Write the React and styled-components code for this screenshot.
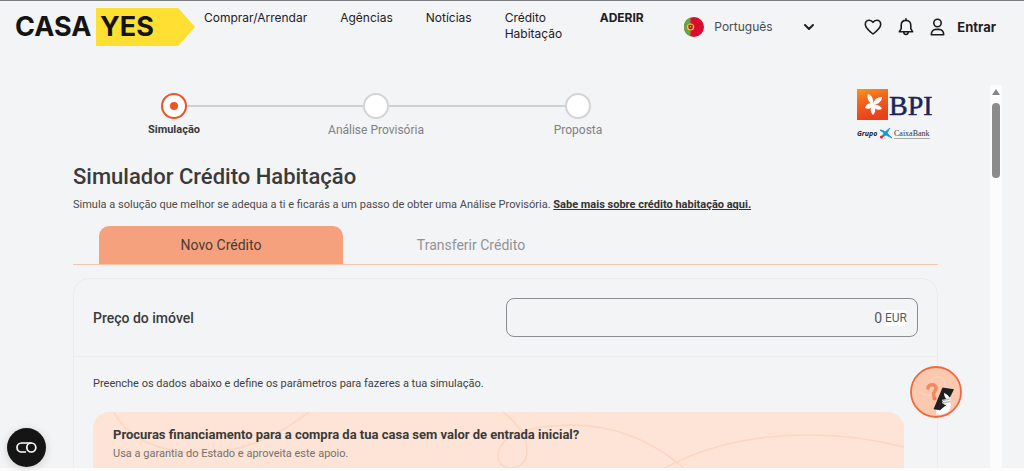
import React from "react";
import styled, { createGlobalStyle, css } from "styled-components";

const GlobalStyle = createGlobalStyle`
  *, *::before, *::after { box-sizing: border-box; }
  html, body { margin: 0; height: 100%; overflow: hidden; }
  body { background: #f3f4f6; color: #3a3a3a; font-family: Roboto, "Liberation Sans", sans-serif; }
  h1, h2, p, ul, ol { margin: 0; padding: 0; }
  button, input, select { font: inherit; color: inherit; }
`;

const Page = styled.div`
  display: flex;
  flex-direction: column;
  height: 100vh;
  border-top: 1px solid #7d7e82;
  border-bottom: 3px solid #fcfcfc;
`;

/* Header */
const Header = styled.header`
  display: flex;
  align-items: flex-start;
  flex: none;
  height: 84px;
  padding: 7px 28px 0 15px;
  font-family: Inter, "Liberation Sans", sans-serif;
  font-size: 12px;
  line-height: 16px;
  color: #1f2023;
`;

const Brand = styled.a`
  display: flex;
  align-items: center;
  flex: none;
  width: 180px;
  height: 38px;
  color: #141414;
  font-size: 27px;
  font-weight: 700;
  line-height: 38px;
  text-decoration: none;
`;

const BrandName = styled.span`
  flex: none;
  width: 81px;
`;

const BrandTag = styled.span`
  flex: 1;
  height: 38px;
  padding-left: 4px;
  background: #ffe032;
  clip-path: polygon(0 0, 83% 0, 100% 50%, 83% 100%, 0 100%);
`;

const Nav = styled.nav`
  flex: 1;
  padding: 2px 0 0 9px;
`;

const NavList = styled.ul`
  display: flex;
  gap: 33px;
  list-style: none;
`;

const NavItem = styled.li`
  ${(p) => p.$narrow && css`width: 62px;`}
`;

const NavLink = styled.a`
  color: inherit;
  text-decoration: none;
  font-weight: ${(p) => (p.$strong ? 700 : 400)};
`;

const Language = styled.label`
  display: flex;
  align-items: center;
  gap: 10px;
  height: 38px;
  margin-right: 50px;
`;

const LanguageSelect = styled.select`
  appearance: none;
  width: 80px;
  border: 0;
  padding: 0;
  background: none;
  color: #4a4b4f;
`;

const Account = styled.div`
  display: flex;
  align-items: center;
  gap: 14px;
  height: 38px;
`;

const IconButton = styled.button`
  display: flex;
  align-items: center;
  gap: 12px;
  padding: 0;
  border: 0;
  background: none;
  font-size: 13px;
  font-weight: 700;
  cursor: pointer;
`;

/* Scrolling pane */
const Pane = styled.div`
  display: flex;
  flex: 1;
  min-height: 0;
  margin-right: 22px;
`;

const Content = styled.main`
  flex: 1;
  min-width: 0;
  overflow: hidden;
  padding: 4px 52px 0 73px;
`;

const ScrollTrack = styled.div`
  display: flex;
  flex-direction: column;
  align-items: center;
  gap: 8px;
  flex: none;
  width: 12px;
  padding-top: 4px;
  background: #fcfcfc;
`;

const ScrollThumb = styled.div`
  width: 8px;
  height: 75px;
  border-radius: 4px;
  background: #8b8b8b;
`;

const TopRow = styled.div`
  display: flex;
  justify-content: space-between;
  padding-right: 6px;
`;

const Stepper = styled.ol`
  display: flex;
  padding-top: 4px;
  list-style: none;
`;

const Step = styled.li`
  width: 202px;
  text-align: center;
  font-size: ${(p) => (p.$active ? 11 : 12)}px;
  line-height: 16px;
  color: ${(p) => (p.$active ? "#3a3a3a" : "#808184")};
  font-weight: ${(p) => (p.$active ? 700 : 400)};
`;

const StepTrack = styled.div`
  display: flex;
  align-items: center;
  margin-bottom: 3px;
`;

const StepLine = styled.span`
  flex: 1;
  height: 2px;
  background: ${(p) => (p.$hidden ? "transparent" : "#cfd0d2")};
`;

const StepDot = styled.span`
  display: flex;
  align-items: center;
  justify-content: center;
  width: 26px;
  height: 26px;
  border: 2px solid ${(p) => (p.$active ? "#ef5323" : "#d3d4d6")};
  border-radius: 50%;
  background: #fff;
  &::after {
    content: "";
    width: 8px;
    height: 8px;
    border-radius: 50%;
    background: ${(p) => (p.$active ? "#ef5323" : "transparent")};
  }
`;

const Title = styled.h1`
  margin-top: 22px;
  font-size: 22px;
  font-weight: 500;
  line-height: 28px;
`;

const Lead = styled.p`
  margin-top: 6px;
  font-size: 11px;
  line-height: 16px;
  color: #4a4a4c;
`;

const LeadLink = styled.a`
  color: #333;
  font-weight: 700;
`;

const Tabs = styled.div`
  display: flex;
  gap: 6px;
  height: 39px;
  margin-top: 13px;
  padding-left: 26px;
  border-bottom: 1px solid #f8c4a8;
`;

const Tab = styled.button`
  width: 244px;
  border: 0;
  border-radius: 10px 10px 0 0;
  font-size: 14px;
  background: ${(p) => (p.$active ? "#f5a17e" : "transparent")};
  color: ${(p) => (p.$active ? "#4b3a34" : "#929396")};
  cursor: pointer;
`;

const Card = styled.section`
  margin-top: 13px;
  border: 1px solid #ebecee;
  border-radius: 16px;
`;

const PriceRow = styled.div`
  display: flex;
  align-items: center;
  justify-content: space-between;
  padding: 19px;
  border-bottom: 1px solid #ebecee;
`;

const PriceLabel = styled.label`
  font-size: 14px;
  font-weight: 500;
`;

const PriceField = styled.div`
  display: flex;
  align-items: center;
  width: 50%;
  height: 39px;
  padding: 0 10px;
  border: 1px solid #8c8d90;
  border-radius: 8px;
  color: #58595b;
  font-size: 12px;
`;

const PriceInput = styled.input`
  flex: 1;
  min-width: 0;
  padding: 0 3px 0 0;
  border: 0;
  outline: 0;
  background: none;
  text-align: right;
  font-size: 14px;
`;

const Currency = styled.span`
  background: #fff;
  line-height: 16px;
`;

const CardBody = styled.div`
  padding: 19px 33px 20px 19px;
`;

const Hint = styled.p`
  font-size: 11px;
  line-height: 16px;
  color: #3f3f41;
`;

const Banner = styled.aside`
  position: relative;
  overflow: hidden;
  height: 72px;
  margin-top: 20px;
  padding: 13px 20px;
  border-radius: 16px;
  background: #fde4d6;
`;

const BannerArt = styled.svg`
  position: absolute;
  top: 0;
  left: 0;
`;

const BannerTitle = styled.h2`
  position: relative;
  font-size: 13px;
  font-weight: 700;
  line-height: 19px;
`;

const BannerText = styled.p`
  position: relative;
  font-size: 11px;
  line-height: 19px;
  color: #77706d;
`;

const Floating = styled.button`
  position: fixed;
  display: flex;
  padding: 0;
  border: 0;
  border-radius: 50%;
  background: none;
  cursor: pointer;
`;

const HelpButton = styled(Floating)`
  right: 62px;
  bottom: 53px;
`;

const CookieButton = styled(Floating)`
  left: 7px;
  bottom: 4px;
  box-shadow: 0 2px 10px rgba(0, 0, 0, 0.15);
`;

const FlagIcon = () => (
  <svg width="20" height="20" viewBox="0 0 20 20" aria-hidden="true">
    <circle cx="10" cy="10" r="10" fill="#dc0a2d" />
    <path d="M6.5.6a10 10 0 0 0 0 18.800z" fill="#6aa343" />
    <circle cx="6.600" cy="10" r="3.600" fill="#fbd32c" />
    <path d="M4.500 7.800h4.200v2.600a2.100 2.100 0 0 1-4.200 0z" fill="#b3122a" />
    <circle cx="6.600" cy="9.800" r=".6" fill="#fff" />
  </svg>
);

const ChevronIcon = () => (
  <svg width="10" height="6" viewBox="0 0 10 6" fill="none" stroke="#1c1c1e" strokeWidth="1.900" strokeLinecap="round" strokeLinejoin="round" aria-hidden="true">
    <path d="M1 1l4 4 4-4" />
  </svg>
);

const HeartIcon = () => (
  <svg width="18" height="18" viewBox="0 0 18 18" fill="none" stroke="#1c1c1e" strokeWidth="1.600" strokeLinejoin="round" aria-hidden="true">
    <path d="M9 16C5.500 13.200 1.300 9.800 1.300 6.400 1.300 4 3 2.200 5.200 2.200c1.600 0 3 .8 3.800 2.200.8-1.400 2.200-2.200 3.800-2.200 2.200 0 3.900 1.800 3.900 4.200 0 3.400-4.200 6.800-7.700 9.600z" />
  </svg>
);

const BellIcon = () => (
  <svg width="20" height="20" viewBox="0 0 20 20" fill="none" stroke="#1c1c1e" strokeWidth="1.600" strokeLinecap="round" strokeLinejoin="round" aria-hidden="true">
    <path d="M10 3.400c-3 0-4.800 2.200-4.800 5v3.300L3.300 14.800h13.400l-1.900-3.100V8.400c0-2.800-1.800-5-4.800-5zM10 1.900v1.500M7.700 15c.2 1.700 1.100 2.500 2.300 2.500s2.100-.8 2.300-2.500" />
  </svg>
);

const UserIcon = () => (
  <svg width="15" height="18" viewBox="0 0 15 18" fill="none" stroke="#1c1c1e" strokeWidth="1.600" strokeLinejoin="round" aria-hidden="true">
    <circle cx="7.500" cy="5" r="3.700" />
    <path d="M1.300 16.700c0-3.200 2-5.300 4.700-5.300h3c2.700 0 4.700 2.100 4.700 5.300z" />
  </svg>
);

const BankLogo = () => (
  <svg width="76" height="52" viewBox="0 0 76 52" role="img" aria-label="BPI Grupo CaixaBank">
    <defs>
      <linearGradient id="bpiOrange" x1="0" y1="0" x2=".3" y2="1">
        <stop offset="0" stopColor="#f79a1c" />
        <stop offset=".4" stopColor="#f1671f" />
        <stop offset="1" stopColor="#e8401c" />
      </linearGradient>
    </defs>
    <rect x="1" width="31" height="31" fill="url(#bpiOrange)" />
    <g fill="#fff">
      <path d="M17 16C14 14 10 10 12 5c4 1 6 6 5 11z" />
      <path d="M17 16c0-4 3-8 9-8 0 4-4 8-9 8z" />
      <path d="M17 16c4-1 8 1 9 4-4 2-8 0-9-4z" />
      <path d="M17 16c3 3 3 7 0 10-3-3-3-7 0-10z" />
      <path d="M18 15c-1 4-5 6-9 4 1-4 5-6 9-4z" />
    </g>
    <text x="33" y="26" fill="#1b2558" stroke="#1b2558" strokeWidth=".5" fontFamily="Liberation Serif, serif" fontSize="28">BPI</text>
    <text x="1" y="47" fill="#222" fontFamily="Open Sans, sans-serif" fontSize="7" fontWeight="700" fontStyle="italic">Grupo</text>
    <path d="M24 41c3 0 4 1 5 2l5-4-3 5 5 5-6-3-5 3 3-5z" fill="#1199dc" stroke="#1199dc" strokeWidth=".8" />
    <circle cx="25.500" cy="48" r="1.600" fill="#e3263b" />
    <circle cx="29" cy="49" r=".8" fill="#f8c51c" />
    <text x="38" y="47" fill="#333" fontFamily="Liberation Serif, serif" fontSize="8">CaixaBank</text>
    <path d="M38 49.500h36" stroke="#aaa" strokeWidth="1" />
  </svg>
);

const HelpIcon = () => (
  <svg width="52" height="52" viewBox="0 0 52 52" aria-hidden="true">
    <circle cx="26" cy="26" r="25" fill="#fbc9af" stroke="#f06b3c" strokeWidth="1.800" />
    <path d="M9 26c7 5 15 4 16-2-5-5-5-13 3-13 7 0 8 7 5 11" fill="none" stroke="#fad7c5" strokeWidth="1" />
    <path d="M18 22c0-4 8-4.500 8 0 0 4-4 4-2 8" fill="none" stroke="#f28a60" strokeWidth="3.600" strokeLinecap="round" />
    <circle cx="24.500" cy="32.500" r="2.100" fill="#f07f52" />
    <path d="M26 44l1-3 6 0 6-8 2 6-2 6c-4 3-8 4-13 3.500z" fill="#fff" />
    <path d="M32.500 21.500l11.500 1.700-8 16-6 5-6.500-1z" fill="#202020" />
    <path d="M34 27c2 .5 5 3 6.500 5.500l-.5 5.500-5 1-3-2.500 1-1.500 4-1.500c-2-1.500-3-4-3-6.500z" fill="#fff" />
    <path d="M32 34.500l7.500-1.500M32.500 37l7.500-1.500" stroke="#b9b9bb" strokeWidth="1.300" />
  </svg>
);

const CookieIcon = () => (
  <svg width="39" height="39" viewBox="0 0 39 39" fill="none" stroke="#fff" strokeWidth="1.700" aria-hidden="true">
    <circle cx="19.500" cy="19.500" r="19.500" fill="#151515" stroke="none" />
    <path d="M19 24h-4.500a4.400 4.400 0 0 1 0-9H24.300" />
    <circle cx="24.300" cy="19.500" r="4.500" />
  </svg>
);

const navItems = [
  { label: "Comprar/Arrendar" },
  { label: "Agências" },
  { label: "Notícias" },
  { label: "Crédito Habitação", narrow: true },
  { label: "ADERIR", strong: true },
];

const steps = ["Simulação", "Análise Provisória", "Proposta"];

export default function App() {
  return (
    <>
      <GlobalStyle />
      <Page>
        <Header>
          <Brand href="#">
            <BrandName>CASA</BrandName>
            <BrandTag>YES</BrandTag>
          </Brand>
          <Nav>
            <NavList>
              {navItems.map((item) => (
                <NavItem key={item.label} $narrow={item.narrow}>
                  <NavLink href="#" $strong={item.strong}>{item.label}</NavLink>
                </NavItem>
              ))}
            </NavList>
          </Nav>
          <Language>
            <FlagIcon />
            <LanguageSelect aria-label="Idioma" defaultValue="pt">
              <option value="pt">Português</option>
            </LanguageSelect>
            <ChevronIcon />
          </Language>
          <Account>
            <IconButton type="button" aria-label="Favoritos"><HeartIcon /></IconButton>
            <IconButton type="button" aria-label="Notificações"><BellIcon /></IconButton>
            <IconButton type="button"><UserIcon />Entrar</IconButton>
          </Account>
        </Header>

        <Pane>
          <Content>
            <TopRow>
              <Stepper>
                {steps.map((label, i) => (
                  <Step key={label} $active={i === 0}>
                    <StepTrack>
                      <StepLine $hidden={i === 0} />
                      <StepDot $active={i === 0} />
                      <StepLine $hidden={i === steps.length - 1} />
                    </StepTrack>
                    {label}
                  </Step>
                ))}
              </Stepper>
              <BankLogo />
            </TopRow>

            <Title>Simulador Crédito Habitação</Title>
            <Lead>
              Simula a solução que melhor se adequa a ti e ficarás a um passo de obter uma Análise Provisória.{" "}
              <LeadLink href="#">Sabe mais sobre crédito habitação aqui.</LeadLink>
            </Lead>

            <Tabs role="tablist">
              <Tab type="button" role="tab" aria-selected="true" $active>Novo Crédito</Tab>
              <Tab type="button" role="tab" aria-selected="false">Transferir Crédito</Tab>
            </Tabs>

            <Card>
              <PriceRow>
                <PriceLabel htmlFor="price">Preço do imóvel</PriceLabel>
                <PriceField>
                  <PriceInput id="price" type="text" inputMode="numeric" defaultValue="0" />
                  <Currency>EUR</Currency>
                </PriceField>
              </PriceRow>
              <CardBody>
                <Hint>Preenche os dados abaixo e define os parâmetros para fazeres a tua simulação.</Hint>
                <Banner>
                  <BannerArt width="811" height="72" viewBox="0 0 811 72" fill="none" stroke="#fbd6c2" strokeWidth="1.500" aria-hidden="true">
                    <path d="M21 0C34 26 66 41 108 41 150 41 188 22 216 0" />
                    <path d="M410 0c14 11 24 24 24 39 0 22-30 22-29 4 1-17 20-29 74-30 45 0 83 18 113 44" />
                    <path d="M570 57c40-22 90-34 145-34 35 0 65 4 96 12" />
                  </BannerArt>
                  <BannerTitle>Procuras financiamento para a compra da tua casa sem valor de entrada inicial?</BannerTitle>
                  <BannerText>Usa a garantia do Estado e aproveita este apoio.</BannerText>
                </Banner>
              </CardBody>
            </Card>
          </Content>
          <ScrollTrack aria-hidden="true">
            <svg width="8" height="6" viewBox="0 0 8 6"><path d="M4 0l4 6H0z" fill="#858585" /></svg>
            <ScrollThumb />
          </ScrollTrack>
        </Pane>
      </Page>
      <HelpButton type="button" aria-label="Ajuda"><HelpIcon /></HelpButton>
      <CookieButton type="button" aria-label="Preferências de cookies"><CookieIcon /></CookieButton>
    </>
  );
}
